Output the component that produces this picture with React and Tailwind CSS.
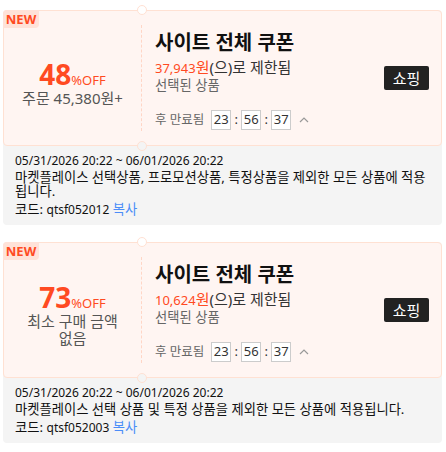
import React from "react";

const font = { fontFamily: '"Noto Sans", "Noto Sans CJK KR", sans-serif' };

function Coupon({ pct, left, price, desc, code }) {
  return (
    <div className="mx-[3px] w-[439px] rounded-[4px] bg-[#f4f4f4]">
      <div className="relative flex h-[136px] rounded-[4px] border border-[#ffe1d3] bg-[#fff5f2]">
        <div className="absolute left-[-1px] top-[-1px] flex h-[18px] w-[36px] items-center justify-center rounded-tl-[4px] rounded-br-[4px] bg-[#ffe2d8] text-[13px] font-bold leading-none text-[#ff4a22]">
          NEW
        </div>
        <div className="absolute left-[133px] top-[-6px] h-[10px] w-[10px] rounded-full border border-[#ffe1d3] bg-white" />
        <div className="absolute left-[133px] bottom-[-6px] h-[10px] w-[10px] rounded-full border border-[#ffe1d3] bg-[#f4f4f4]" />
        <div className="flex w-[137px] flex-col items-center justify-center pt-[10px]">
          <div className="flex items-baseline text-[#ff4a22]">
            <span className="text-[28px] font-bold leading-[28px]">{pct}</span>
            <span className="text-[13px] leading-none">%OFF</span>
          </div>
          <div className="mt-[2px] text-center text-[15px] leading-[17px] text-[#555]">{left}</div>
        </div>
        <div className="my-[14px] border-l border-dashed border-[#ffd6c6]" />
        <div className="flex flex-1 items-center pr-[12px]">
          <div className="flex-1 self-stretch pl-[13px] pt-[20px]">
            <div className="text-[20px] font-bold leading-[24px] text-[#111]">사이트 전체 쿠폰</div>
            <div className="mt-[4px] text-[15px] leading-[17px] text-[#333]">
              <span className="text-[#ff4a22]">
                <span className="text-[13px]">{price}</span>원
              </span>
              (으)로 제한됨
            </div>
            <div className="text-[13.3px] leading-[17px] text-[#666]">선택된 상품</div>
            <div className="mt-[16px] flex items-center text-[12.5px] text-[#666]">
              <span className="mr-[7px] leading-[20px]">후 만료됨</span>
              <span className="flex h-[20px] w-[20px] items-center justify-center border border-[#ccc] bg-white text-[13px] text-[#333]">23</span>
              <span className="w-[10px] text-center text-[13px] text-[#333]">:</span>
              <span className="flex h-[20px] w-[20px] items-center justify-center border border-[#ccc] bg-white text-[13px] text-[#333]">56</span>
              <span className="w-[10px] text-center text-[13px] text-[#333]">:</span>
              <span className="flex h-[20px] w-[20px] items-center justify-center border border-[#ccc] bg-white text-[13px] text-[#333]">37</span>
              <svg className="ml-[8px]" width="10" height="8" viewBox="0 0 10 8">
                <polyline points="1,6 5,2 9,6" fill="none" stroke="#999" strokeWidth="1.2" />
              </svg>
            </div>
          </div>
          <div className="flex h-[24px] w-[45px] items-center justify-center rounded-[2px] bg-[#222] text-[15px] text-white">
            쇼핑
          </div>
        </div>
      </div>
      <div className="pl-[12px] pr-[10px] pb-[6px] pt-[6px] text-[13.3px] text-[#111]">
        <div className="text-[12px] leading-[18px]">05/31/2026 20:22 ~ 06/01/2026 20:22</div>
        <div className="leading-[14px]">{desc}</div>
        <div className="mt-[2px] leading-[18px]">
          코드: <span className="text-[12px]">{code}</span> <span className="text-[#4b8df8]">복사</span>
        </div>
      </div>
    </div>
  );
}

export default function App() {
  return (
    <div className="min-h-[452px] w-[446px] bg-white pt-[10px]" style={font}>
      <Coupon
        pct="48"
        left="주문 45,380원+"
        price="37,943"
        desc="마켓플레이스 선택상품, 프로모션상품, 특정상품을 제외한 모든 상품에 적용됩니다."
        code="qtsf052012"
      />
      <div className="mt-[17px]">
        <Coupon
          pct="73"
          left={<>최소 구매 금액<br />없음</>}
          price="10,624"
          desc="마켓플레이스 선택 상품 및 특정 상품을 제외한 모든 상품에 적용됩니다."
          code="qtsf052003"
        />
      </div>
    </div>
  );
}
